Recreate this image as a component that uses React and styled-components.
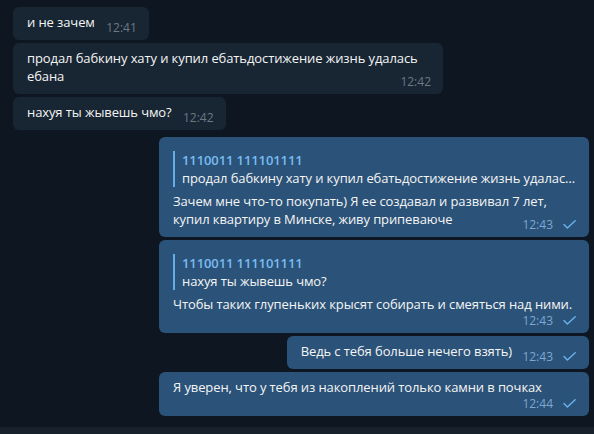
import styled, { createGlobalStyle } from 'styled-components'

const GlobalStyle = createGlobalStyle`
  html, body {
    margin: 0;
    padding: 0;
    background: #0e1621;
  }
  body {
    font-family: 'Open Sans', 'Liberation Sans', sans-serif;
    -webkit-font-smoothing: antialiased;
  }
`

const messages = [
  { id: 1, out: false, text: 'и не зачем', time: '12:41' },
  { id: 2, out: false, text: 'продал бабкину хату и купил ебатьдостижение жизнь удалась ебана', time: '12:42' },
  { id: 3, out: false, text: 'нахуя ты жывешь чмо?', time: '12:42' },
  {
    id: 4,
    out: true,
    groupStart: true,
    reply: { name: '1110011 111101111', text: 'продал бабкину хату и купил ебатьдостижение жизнь удалась ебана' },
    text: 'Зачем мне что-то покупать) Я ее создавал и развивал 7 лет, купил квартиру в Минске, живу припеваюче',
    time: '12:43',
  },
  {
    id: 5,
    out: true,
    reply: { name: '1110011 111101111', text: 'нахуя ты жывешь чмо?' },
    text: 'Чтобы таких глупеньких крысят собирать и смеяться над ними.',
    time: '12:43',
  },
  { id: 6, out: true, text: 'Ведь с тебя больше нечего взять)', time: '12:43' },
  { id: 7, out: true, text: 'Я уверен, что у тебя из накоплений только камни в почках', time: '12:44' },
]

const Chat = styled.div`
  display: flex;
  flex-direction: column;
  height: 100vh;
  overflow: hidden;
`

const Feed = styled.div`
  display: flex;
  flex-direction: column;
  gap: 3px;
  padding: 7px 5px 11px 13px;
`

const Bubble = styled.div`
  position: relative;
  align-self: ${({ $out }) => ($out ? 'flex-end' : 'flex-start')};
  box-sizing: border-box;
  max-width: 430px;
  margin-top: ${({ $groupStart }) => ($groupStart ? '4px' : '0')};
  padding: 6px ${({ $out }) => ($out ? '13px' : '12px')} 9px 14px;
  border-radius: 6px;
  background: ${({ $out }) => ($out ? '#2b5278' : '#182533')};
  color: #f5f5f5;
  font-size: 13px;
  line-height: 18px;
  letter-spacing: -0.1px;
`

const Reply = styled.div`
  margin: 8px 0 5px;
  padding-left: 7px;
  border-left: 2px solid #64aee9;
  overflow: hidden;
`

const ReplyName = styled.div`
  color: #79bcf2;
  font-weight: 600;
  white-space: nowrap;
`

const ReplyText = styled.div`
  white-space: nowrap;
  overflow: hidden;
  text-overflow: ellipsis;
`

const Body = styled.div`
  overflow-wrap: break-word;
`

const TimeSpacer = styled.span`
  float: right;
  width: ${({ $out }) => ($out ? '64px' : '42px')};
  height: 11px;
`

const Meta = styled.span`
  position: absolute;
  right: ${({ $out }) => ($out ? '13px' : '12px')};
  bottom: 5px;
  display: flex;
  align-items: center;
  gap: 10px;
  font-size: 12px;
  line-height: 14px;
  letter-spacing: 0;
  color: ${({ $out }) => ($out ? '#7ea8d1' : '#6c7883')};
`

const Check = styled.svg`
  width: 13px;
  height: 9px;
  margin-bottom: 1px;
`

const Composer = styled.div`
  flex-shrink: 0;
  height: 48px;
  background: #17212b;
`

const Tick = () => (
  <Check viewBox='0 0 13 9'>
    <path d='M1 4.6L4.4 8L12.2 0.8' fill='none' stroke='#68b4f2' strokeWidth='1.4' strokeLinecap='round' strokeLinejoin='round' />
  </Check>
)

const Message = ({ message }) => {
  const { out, groupStart, reply, text, time } = message

  return (
    <Bubble $groupStart={groupStart} $out={out}>
      {reply && (
        <Reply>
          <ReplyName>{reply.name}</ReplyName>
          <ReplyText>{reply.text}</ReplyText>
        </Reply>
      )}
      <Body>
        {text}
        <TimeSpacer $out={out} />
      </Body>
      <Meta $out={out}>
        {time}
        {out && <Tick />}
      </Meta>
    </Bubble>
  )
}

const App = () => (
  <>
    <GlobalStyle />
    <Chat>
      <Feed>
        {messages.map((message) => (
          <Message key={message.id} message={message} />
        ))}
      </Feed>
      <Composer />
    </Chat>
  </>
)

export default App
